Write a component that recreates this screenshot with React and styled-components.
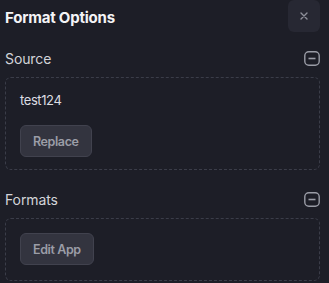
import React from "react";
import styled, { createGlobalStyle } from "styled-components";

const Global = createGlobalStyle`
  html, body {
    margin: 0;
    background: #1d1e27;
  }
  body {
    font-family: Inter, "Noto Sans", sans-serif;
  }
`;

const Panel = styled.div`
  width: 315px;
  padding: 0 9px 0 5px;
  height: 283px;
  box-sizing: content-box;
  color: #d6d7dc;
`;

const Header = styled.div`
  display: flex;
  align-items: center;
  justify-content: space-between;
  height: 32px;
`;

const Title = styled.h2`
  margin: 0;
  font-size: 15px;
  font-weight: 700;
  color: #f4f4f6;
  letter-spacing: -0.2px;
  padding-top: 2px;
`;

const CloseButton = styled.button`
  width: 32px;
  height: 32px;
  border: none;
  border-radius: 6px;
  background: #272833;
  color: #8e909a;
  display: flex;
  align-items: center;
  justify-content: center;
  padding: 0;
`;

const Section = styled.section`
  margin-top: ${({ first }) => (first ? "12px" : "15px")};
`;

const SectionHead = styled.div`
  display: flex;
  align-items: center;
  justify-content: space-between;
  height: 28px;
  margin-bottom: 5px;
`;

const Label = styled.span`
  font-size: 14px;
  color: #d3d4d9;
  letter-spacing: -0.1px;
`;

const Box = styled.div`
  border: 1px dashed #3b3d49;
  border-radius: 6px;
  padding: ${({ pad }) => pad};
`;

const Value = styled.div`
  font-size: 13px;
  line-height: 18px;
  color: #dcdde2;
  letter-spacing: -0.4px;
  margin-bottom: 16px;
`;

const Button = styled.button`
  height: 32px;
  padding: 0 12px;
  border-radius: 6px;
  border: 1px solid #41424e;
  background: #33343f;
  color: #9b9da7;
  font-family: Inter, "Noto Sans", sans-serif;
  font-size: 12.5px;
  letter-spacing: -0.4px;
  font-weight: 600;
  display: block;
`;

const MinusIcon = () => (
  <svg width="16" height="15" viewBox="0 0 16 15" fill="none">
    <rect x="0.8" y="0.8" width="14.4" height="13.4" rx="4" stroke="#9a9ca6" strokeWidth="1.4" />
    <line x1="4.5" y1="7.5" x2="11.5" y2="7.5" stroke="#9a9ca6" strokeWidth="1.6" />
  </svg>
);

const CloseIcon = () => (
  <svg width="8" height="8" viewBox="0 0 8 8">
    <path d="M1 1L7 7M7 1L1 7" stroke="#8e909a" strokeWidth="1.4" strokeLinecap="round" />
  </svg>
);

export default function App() {
  return (
    <>
      <Global />
      <Panel>
        <Header>
          <Title>Format Options</Title>
          <CloseButton>
            <CloseIcon />
          </CloseButton>
        </Header>

        <Section first>
          <SectionHead>
            <Label>Source</Label>
            <MinusIcon />
          </SectionHead>
          <Box pad="13px 14px 12px">
            <Value>test124</Value>
            <Button>Replace</Button>
          </Box>
        </Section>

        <Section>
          <SectionHead>
            <Label>Formats</Label>
            <MinusIcon />
          </SectionHead>
          <Box pad="14px 14px 15px">
            <Button>Edit App</Button>
          </Box>
        </Section>
      </Panel>
    </>
  );
}
